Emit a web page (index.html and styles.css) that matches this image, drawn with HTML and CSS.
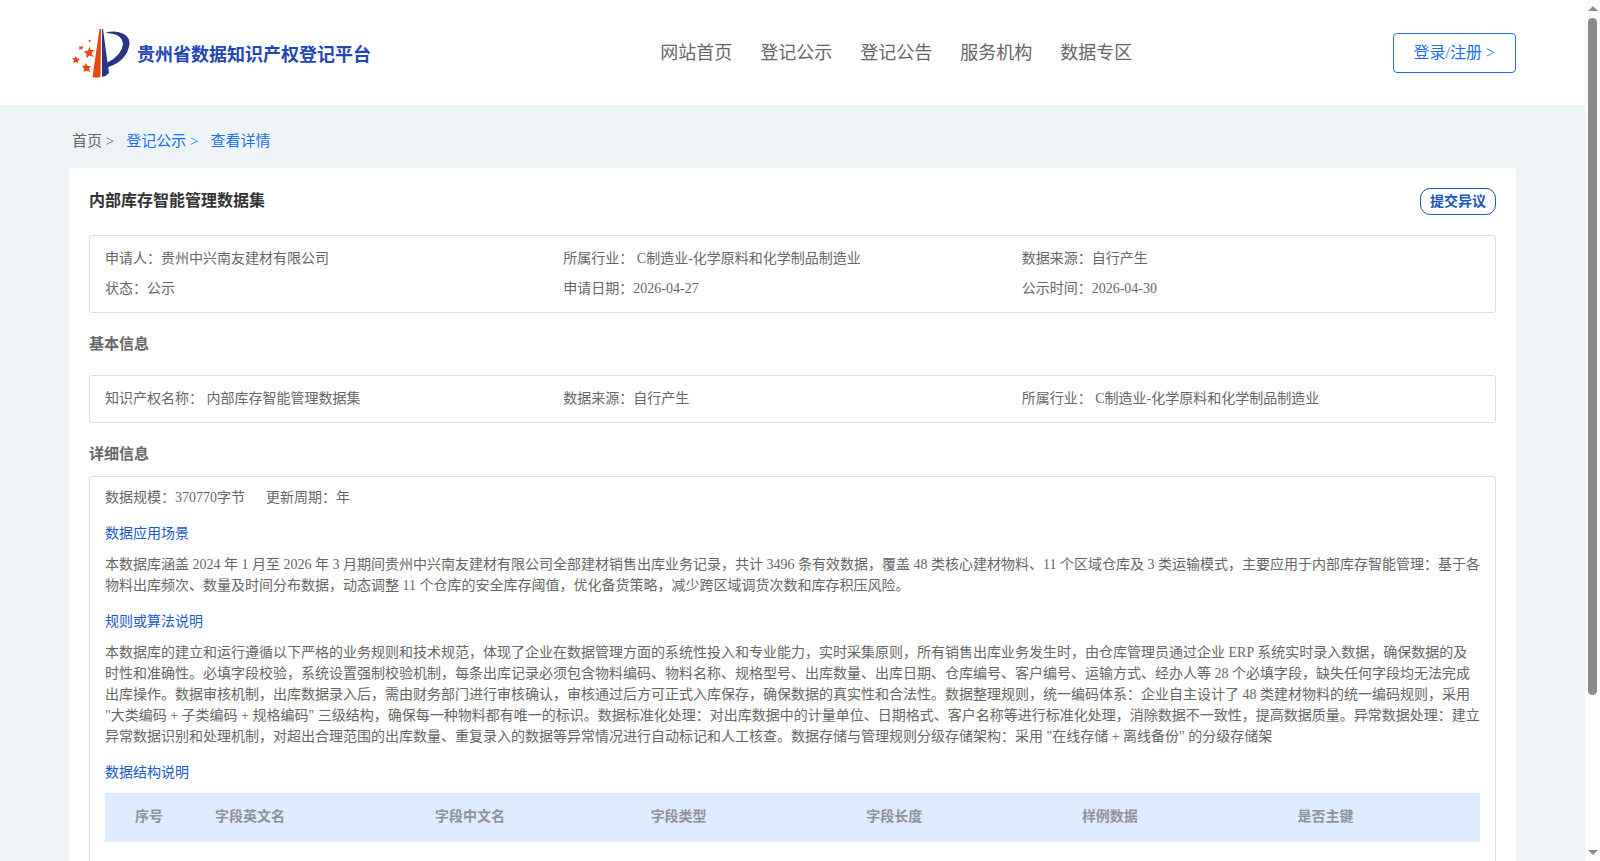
FILE: index.html
```html
<!DOCTYPE html>
<html lang="zh-CN">
<head>
    <meta charset="UTF-8">
    <meta name="viewport" content="width=device-width, initial-scale=1.0">
    <title>贵州省数据知识产权登记平台</title>
    <link rel="stylesheet" href="styles.css">
</head>
<body>
    <div class="page">
        <header class="header">
            <a class="logo" href="#">
                <svg class="logo-icon" width="60" height="50" viewBox="0 0 60 50" aria-hidden="true">
                    <path d="M27.500 1 L29 1 L28.500 49 Q24 50 20.500 49 Z" fill="#e8460f"/>
                    <path d="M30 1 L31 1 L35.500 34.500 Q50 27 51 16 Q50 5 33 5 Q38 3.300 44.500 3.700 Q58 6 57.500 16 Q55 33 36.300 39 L37 45 Q34 48.500 30 49 Z" fill="#2b3487"/>
                    <path d="M17.800 18.500 L18.500 22 L22.500 22 L19.500 25 L21.500 29 L17.500 27.500 L14.500 30 L14.500 26 L12 23.500 L16 22.500 Z" fill="#e8460f"/>
                    <path d="M14 35 L15.500 38 L19 38 L17 40.500 L18 44 L14.500 42.500 L11.500 44 L12 40.500 L10 38 L13 37.500 Z" fill="#e8460f"/>
                    <path d="M3.500 28 L4.800 30.300 L8 31 L5.700 32.700 L6 35.500 L3.800 34 L1.200 35 L2 32 L0 30 L2.800 30.300 Z" fill="#e8460f"/>
                    <path d="M7 18 L9 18.800 L11.500 18 L10.500 20 L10 22 L8.500 21 L7 21.500 L7.500 19.800 Z" fill="#e8460f"/>
                    <path d="M16.700 12 L18.500 12 L18.700 13.800 L17 14 Z" fill="#e8460f"/>
                </svg>
                <span class="logo-text">贵州省数据知识产权登记平台</span>
            </a>
            <nav class="nav">
                <a href="#">网站首页</a>
                <a href="#">登记公示</a>
                <a href="#">登记公告</a>
                <a href="#">服务机构</a>
                <a href="#">数据专区</a>
            </nav>
            <button class="login-btn" type="button">登录/注册 &gt;</button>
        </header>

        <main class="main">
            <div class="breadcrumb">
                <a class="crumb-home" href="#">首页 &gt;</a>
                <a href="#">登记公示 &gt;</a>
                <a href="#">查看详情</a>
            </div>

            <div class="card">
                <div class="card-head">
                    <h1>内部库存智能管理数据集</h1>
                    <button class="objection-btn" type="button">提交异议</button>
                </div>

                <div class="info-box">
                    <span>申请人：贵州中兴南友建材有限公司</span>
                    <span>所属行业： C制造业-化学原料和化学制品制造业</span>
                    <span>数据来源：自行产生</span>
                    <span>状态：公示</span>
                    <span>申请日期：2026-04-27</span>
                    <span>公示时间：2026-04-30</span>
                </div>

                <h2 class="basic-title">基本信息</h2>
                <div class="info-box">
                    <span>知识产权名称： 内部库存智能管理数据集</span>
                    <span>数据来源：自行产生</span>
                    <span>所属行业： C制造业-化学原料和化学制品制造业</span>
                </div>

                <h2 class="detail-title">详细信息</h2>
                <div class="detail-box">
                    <div class="scale">
                        <span>数据规模：370770字节</span>
                        <span>更新周期：年</span>
                    </div>
                    <h3>数据应用场景</h3>
                    <p>本数据库涵盖 2024 年 1 月至 2026 年 3 月期间贵州中兴南友建材有限公司全部建材销售出库业务记录，共计 3496 条有效数据，覆盖 48 类核心建材物料、11 个区域仓库及 3 类运输模式，主要应用于内部库存智能管理：基于各物料出库频次、数量及时间分布数据，动态调整 11 个仓库的安全库存阈值，优化备货策略，减少跨区域调货次数和库存积压风险。</p>
                    <h3>规则或算法说明</h3>
                    <p>本数据库的建立和运行遵循以下严格的业务规则和技术规范，体现了企业在数据管理方面的系统性投入和专业能力，实时采集原则，所有销售出库业务发生时，由仓库管理员通过企业 ERP 系统实时录入数据，确保数据的及时性和准确性。必填字段校验，系统设置强制校验机制，每条出库记录必须包含物料编码、物料名称、规格型号、出库数量、出库日期、仓库编号、客户编号、运输方式、经办人等 28 个必填字段，缺失任何字段均无法完成出库操作。数据审核机制，出库数据录入后，需由财务部门进行审核确认，审核通过后方可正式入库保存，确保数据的真实性和合法性。数据整理规则，统一编码体系：企业自主设计了 48 类建材物料的统一编码规则，采用 "大类编码 + 子类编码 + 规格编码" 三级结构，确保每一种物料都有唯一的标识。数据标准化处理：对出库数据中的计量单位、日期格式、客户名称等进行标准化处理，消除数据不一致性，提高数据质量。异常数据处理：建立异常数据识别和处理机制，对超出合理范围的出库数量、重复录入的数据等异常情况进行自动标记和人工核查。数据存储与管理规则分级存储架构：采用 "在线存储 + 离线备份" 的分级存储架</p>
                    <h3>数据结构说明</h3>
                    <table class="field-table">
                        <thead>
                            <tr>
                                <th class="col-index">序号</th>
                                <th class="col-en">字段英文名</th>
                                <th>字段中文名</th>
                                <th>字段类型</th>
                                <th>字段长度</th>
                                <th>样例数据</th>
                                <th class="col-key">是否主键</th>
                            </tr>
                        </thead>
                        <tbody>
                            <tr class="empty-row"><td colspan="7"></td></tr>
                        </tbody>
                    </table>
                </div>
            </div>
        </main>
    </div>

    <div class="scrollbar" aria-hidden="true">
        <div class="arrow-up"></div>
        <div class="track">
            <div class="thumb"></div>
        </div>
        <div class="arrow-down"></div>
    </div>
</body>
</html>
```
FILE: styles.css
```css
* {
    box-sizing: border-box;
}
body {
    display: flex;
    height: 100vh;
    margin: 0;
    background-color: #eef3f6;
    font-family: "Liberation Serif", "Noto Sans CJK SC", serif;
    font-size: 14px;
    color: #666;
}
a {
    color: inherit;
    text-decoration: none;
}
button {
    font-family: inherit;
    background: white;
    cursor: pointer;
}
h1, h2, h3, p {
    margin: 0;
}
/* the page scrolls in its own column, next to the custom scrollbar */
.page {
    flex: 1;
    min-width: 0;
    overflow-y: auto;
    scrollbar-width: none;
}
.header {
    display: flex;
    justify-content: space-between;
    align-items: center;
    height: 105px;
    padding: 0 69px;
    background: white;
}
.logo {
    display: flex;
    align-items: center;
    gap: 5px;
    width: 331px;
    padding-left: 3px;
}
.logo-text {
    padding-top: 5px;
    font-size: 18px;
    line-height: 26px;
    font-weight: bold;
    color: #2446b5;
}
.nav {
    display: flex;
    gap: 28px;
    font-size: 18px;
    line-height: 26px;
}
.login-btn {
    height: 40px;
    padding: 0 20px;
    border: 1px solid #1b6ff0;
    border-radius: 4px;
    font-size: 16px;
    line-height: 36px;
    color: #1b6ff0;
}
.main {
    padding: 0 69px 40px;
}
.breadcrumb {
    display: flex;
    gap: 12px;
    padding: 24px 3px 15px;
    font-size: 15px;
    line-height: 24px;
    color: #1b6ff0;
}
.crumb-home {
    color: #666;
}
.card {
    padding: 20px;
    background: white;
}
.card-head {
    display: flex;
    justify-content: space-between;
    align-items: flex-start;
    margin-bottom: 20px;
}
.card-head h1 {
    font-size: 16px;
    line-height: 25px;
    color: #333;
}
.objection-btn {
    height: 27px;
    padding: 0 9px;
    border: 1px solid #1a55c0;
    border-radius: 10px;
    font-size: 14px;
    line-height: 23px;
    font-weight: bold;
    color: #1a55c0;
}
.info-box {
    display: grid;
    grid-template-columns: repeat(3, 1fr);
    padding: 8px 15px;
    border: 1px solid #dcdee0;
    border-radius: 3px;
    line-height: 30px;
}
h2 {
    font-size: 15px;
    line-height: 22px;
}
.basic-title {
    margin: 20px 0;
}
.detail-title {
    margin: 20px 0 11px;
}
.detail-box {
    padding: 10px 15px;
    border: 1px solid #dcdee0;
    border-radius: 3px;
    line-height: 21px;
}
.scale {
    display: flex;
    gap: 21px;
}
h3 {
    margin: 15px 0 10px;
    font-size: 14px;
    font-weight: normal;
    color: #1a58cc;
}
.field-table {
    width: 100%;
    table-layout: fixed;
    border-collapse: collapse;
}
.field-table th {
    height: 48px;
    padding: 0 10px;
    background: #dfebfe;
    border-bottom: 1px solid #ebeef5;
    text-align: left;
    color: #909399;
}
.field-table .col-index {
    width: 100px;
    padding-left: 30px;
}
.field-table .col-en {
    width: 16%;
}
.field-table .col-key {
    width: 14%;
}
.empty-row td {
    height: 150px;
}
.scrollbar {
    display: flex;
    flex-direction: column;
    align-items: center;
    width: 15px;
    padding: 6px 0;
    background: #fcfcfc;
}
.arrow-up,
.arrow-down {
    border-left: 5px solid transparent;
    border-right: 5px solid transparent;
}
.arrow-up {
    border-bottom: 5px solid #8b8b8b;
}
.arrow-down {
    border-top: 5px solid #8b8b8b;
}
.track {
    flex: 1;
    width: 9px;
    margin: 7px 0;
}
.thumb {
    height: 82%;
    border-radius: 5px;
    background: #8b8b8b;
}
```
